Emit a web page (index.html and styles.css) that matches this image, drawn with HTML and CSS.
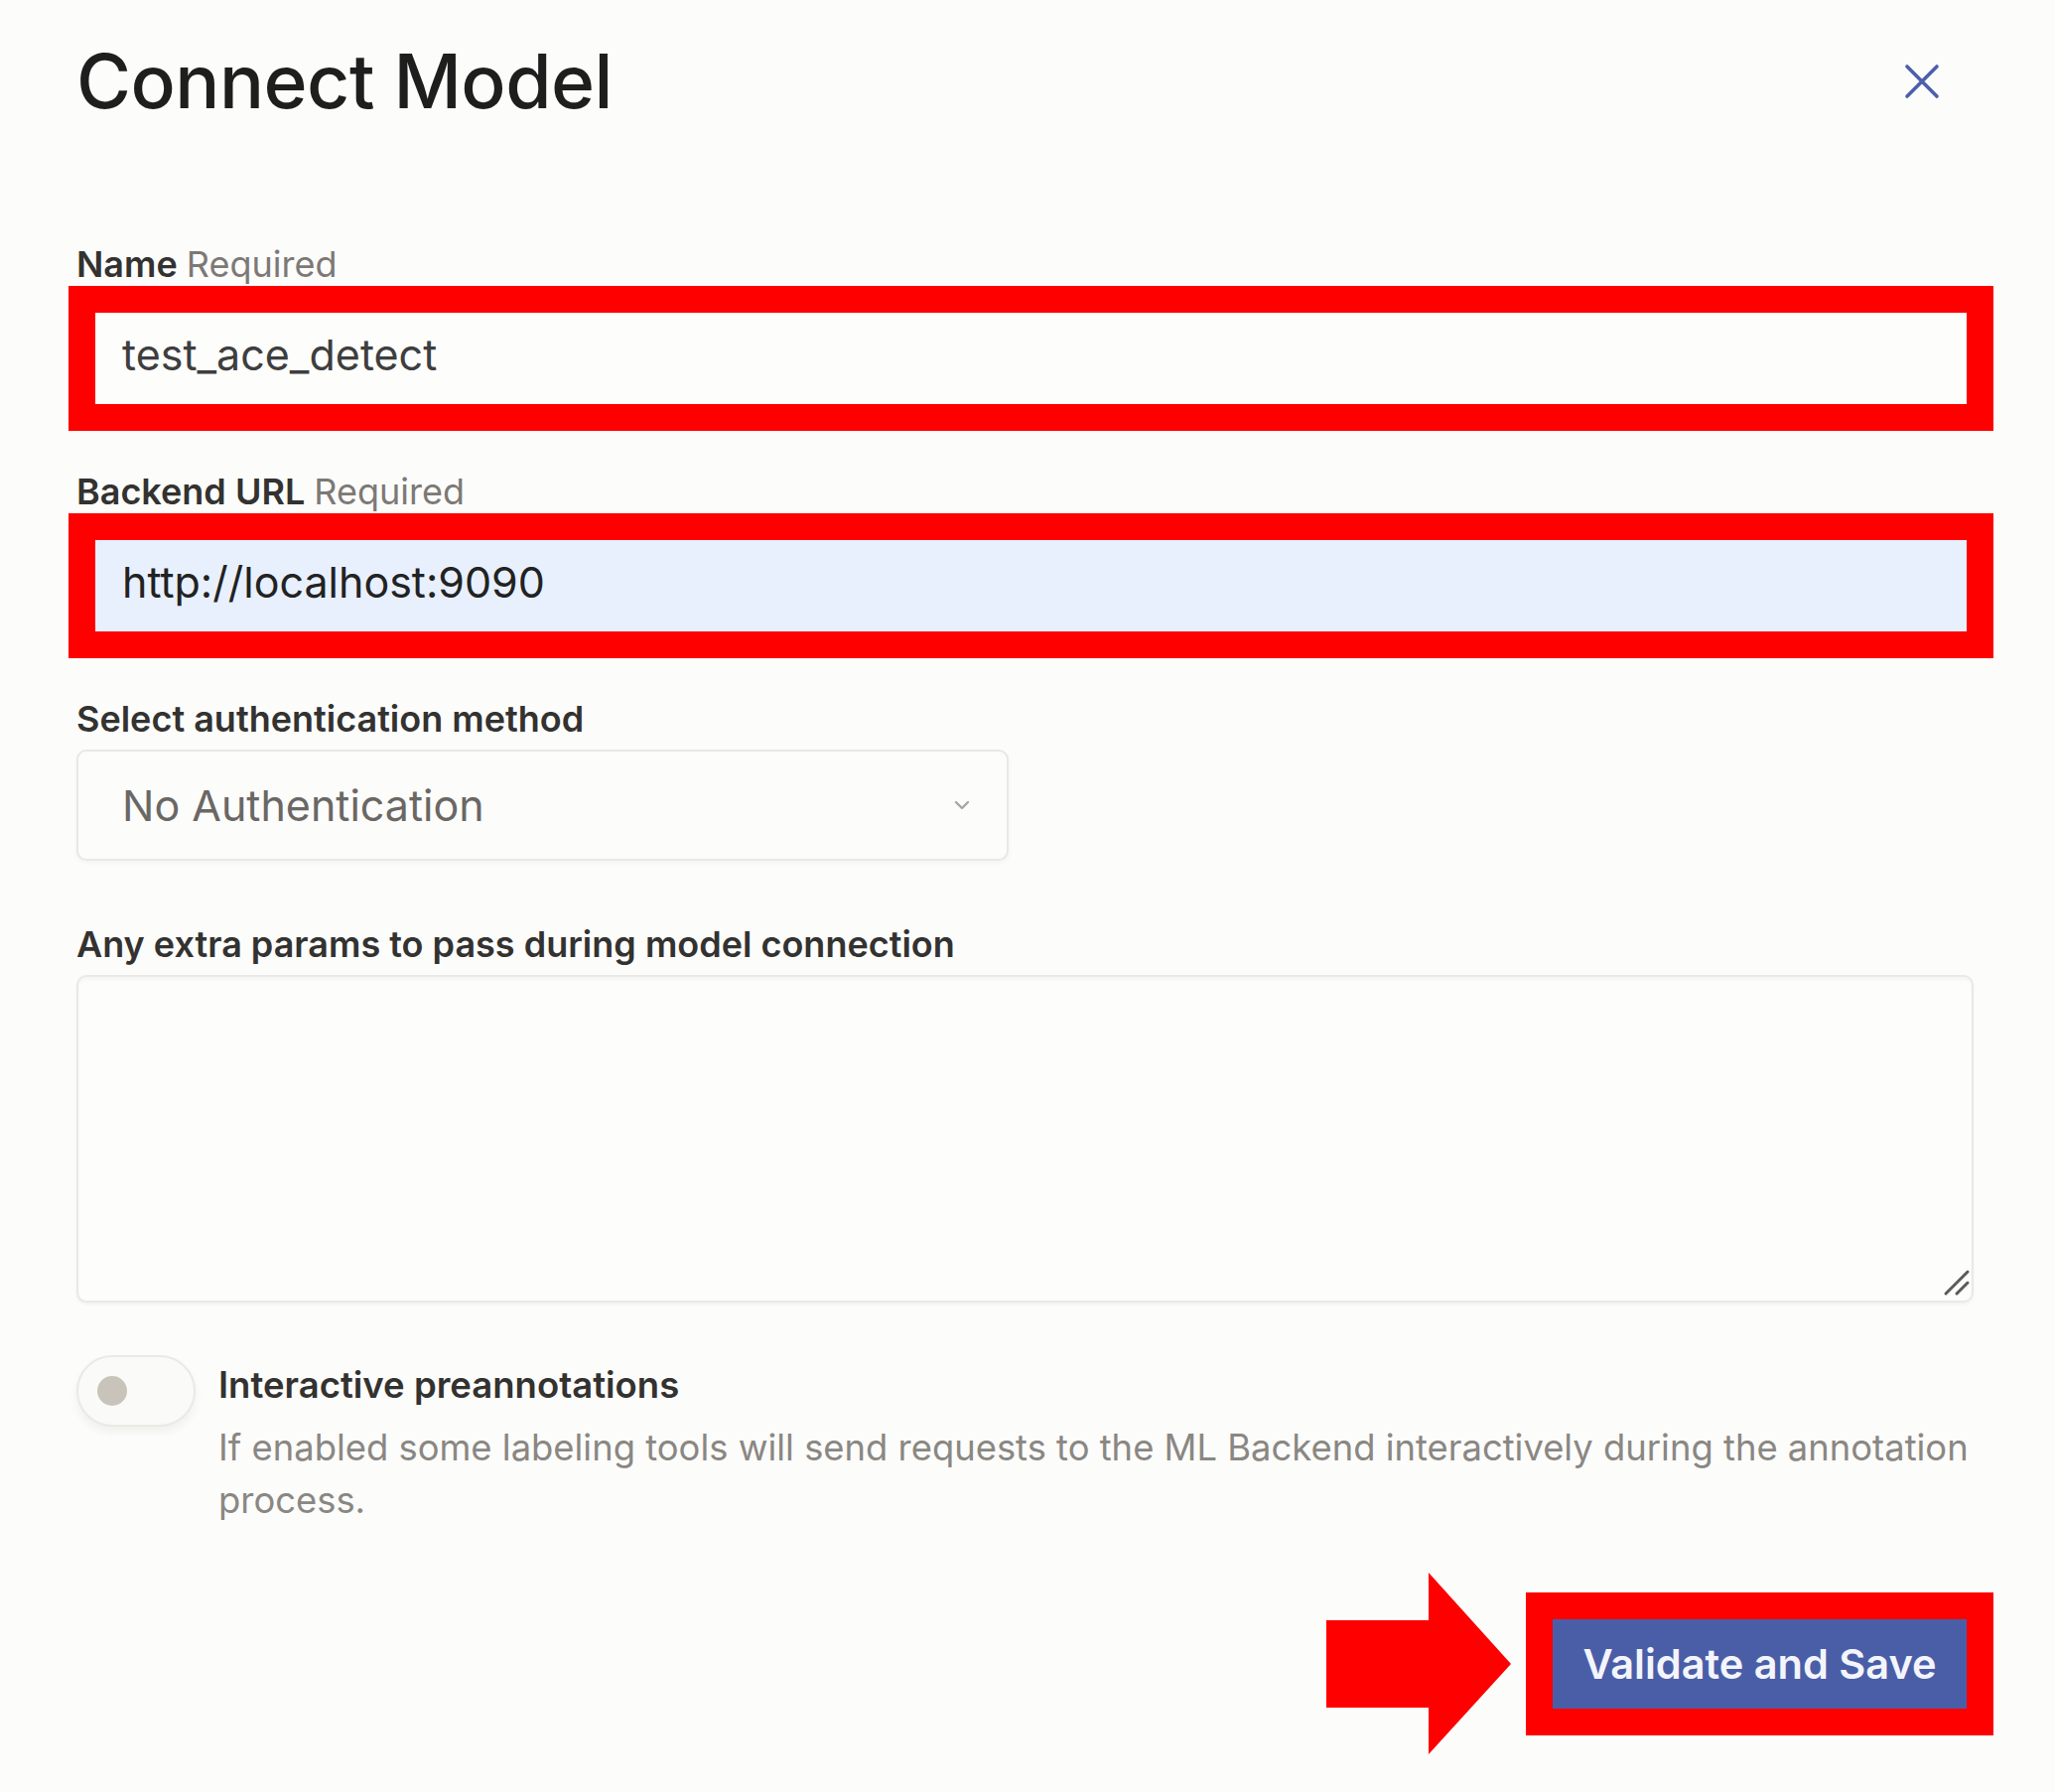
FILE: index.html
```html
<!DOCTYPE html>
<html lang="en">
<head>
    <meta charset="UTF-8">
    <title>Connect Model</title>
    <link rel="stylesheet" href="styles.css">
</head>
<body>

    <div class="modal">
        <div class="modal-header">
            <h1 class="modal-title">Connect Model</h1>
            <button class="close-btn" type="button" aria-label="Close">
                <svg width="36" height="36" viewBox="0 0 36 36">
                    <path d="M3 3 L33 33 M33 3 L3 33" stroke="#4c5fae" stroke-width="3.6" stroke-linecap="round" fill="none"/>
                </svg>
            </button>
        </div>

        <form class="form">
            <div class="field field-name">
                <label class="label">Name <span class="required">Required</span></label>
                <div class="mark">
                    <input class="input" type="text" value="test_ace_detect">
                </div>
            </div>

            <div class="field">
                <label class="label">Backend URL <span class="required">Required</span></label>
                <div class="mark">
                    <input class="input input-filled" type="text" value="http://localhost:9090">
                </div>
            </div>

            <div class="field">
                <label class="label label-plain">Select authentication method</label>
                <div class="select">
                    <span class="select-value">No Authentication</span>
                    <svg width="18" height="12" viewBox="0 0 18 12">
                        <path d="M3 3 L9 9 L15 3" stroke="#a9a6a1" stroke-width="2.4" fill="none" stroke-linecap="round" stroke-linejoin="round"/>
                    </svg>
                </div>
            </div>

            <div class="field field-params">
                <label class="label label-plain">Any extra params to pass during model connection</label>
                <div class="textarea-wrap">
                    <textarea class="textarea"></textarea>
                    <svg class="grip" width="28" height="28" viewBox="0 0 28 28">
                        <path d="M3 25 L25 3 M14 25 L25 14" stroke="#5a5a5a" stroke-width="3" stroke-linecap="round"/>
                    </svg>
                </div>
            </div>

            <div class="toggle-row">
                <div class="toggle"><span class="knob"></span></div>
                <div class="toggle-text">
                    <div class="toggle-title">Interactive preannotations</div>
                    <div class="toggle-desc">If enabled some labeling tools will send requests to the ML Backend interactively during the annotation process.</div>
                </div>
            </div>

            <div class="actions">
                <svg class="arrow" width="186" height="183" viewBox="0 0 186 183">
                    <polygon points="0,48 103,48 103,0 186,92 103,183 103,136 0,136" fill="#ff0000"/>
                </svg>
                <div class="mark mark-btn">
                    <button class="submit" type="button">Validate and Save</button>
                </div>
            </div>
        </form>
    </div>

</body>
</html>
```

FILE: styles.css
```css
*{
    margin: 0;
    padding: 0;
    box-sizing: border-box;
}

body{
    background-color: #fcfcfb;
    font-family: Inter, "Noto Sans", sans-serif;
    color: #2b2b2b;
}

.modal{
    padding: 44px 82px 0 77px;
}

.modal-header{
    display: flex;
    justify-content: space-between;
    align-items: center;
    height: 76px;
}

.modal-title{
    font-size: 75px;
    line-height: 76px;
    font-weight: 500;
    color: #1e1e1e;
    letter-spacing: -0.5px;
}

.close-btn{
    border: none;
    background: none;
    width: 36px;
    height: 36px;
    margin-right: 34px;
    display: flex;
}

.form{
    margin-top: 124px;
}

.field{
    margin-bottom: 39px;
}

.label{
    display: block;
    font-size: 36px;
    line-height: 44px;
    font-weight: 600;
    color: #333230;
}

.label-plain{
    margin-bottom: 9px;
}

.required{
    font-weight: 400;
    color: #7c7975;
}

.mark{
    border: 27px solid #ff0000;
    margin-left: -8px;
    margin-right: -20px;
}

.input{
    display: block;
    width: 100%;
    height: 92px;
    border: none;
    outline: none;
    padding: 0 27px 9px;
    font-family: Inter, "Noto Sans", sans-serif;
    font-size: 43px;
    color: #3e3e3e;
    background-color: #fdfdfc;
}

.input-filled{
    background-color: #e8f0fe;
    color: #222;
}

.select{
    width: 939px;
    height: 112px;
    border: 2px solid #ebe8e3;
    border-radius: 10px;
    background-color: #fcfcfb;
    box-shadow: 0 2px 4px rgba(0,0,0,0.04);
    display: flex;
    justify-content: space-between;
    align-items: center;
    padding: 0 36px 0 44px;
}

.select-value{
    font-size: 43px;
    color: #6a6764;
}

.field-params{
    margin-top: 62px;
    margin-bottom: 53px;
}

.textarea-wrap{
    position: relative;
}

.textarea{
    display: block;
    width: 100%;
    height: 330px;
    border: 2px solid #ece9e4;
    border-radius: 10px;
    background-color: #fdfdfc;
    box-shadow: inset 0 3px 3px rgba(0,0,0,0.03), 0 2px 3px rgba(0,0,0,0.04);
    resize: none;
    outline: none;
}

.grip{
    position: absolute;
    right: 3px;
    bottom: 6px;
}

.toggle-row{
    display: flex;
    gap: 23px;
}

.toggle{
    width: 120px;
    height: 72px;
    flex-shrink: 0;
    border: 2px solid #ece9e3;
    border-radius: 36px;
    background-color: #fafaf8;
    box-shadow: 0 5px 8px rgba(0,0,0,0.05);
    display: flex;
    align-items: center;
    padding-left: 19px;
}

.knob{
    width: 30px;
    height: 30px;
    border-radius: 50%;
    background-color: #c9c4ba;
}

.toggle-text{
    padding-top: 8px;
}

.toggle-title{
    font-size: 36.5px;
    line-height: 44px;
    font-weight: 600;
    color: #333230;
    margin-bottom: 15px;
}

.toggle-desc{
    font-size: 36.4px;
    line-height: 53px;
    color: #8a8782;
}

.actions{
    display: flex;
    justify-content: flex-end;
    align-items: center;
    gap: 15px;
    margin-top: 46px;
    margin-right: -20px;
}

.arrow{
    display: block;
}

.mark-btn{
    margin: 0;
}

.submit{
    display: block;
    width: 417px;
    height: 90px;
    border: none;
    background-color: #4a5ea8;
    color: #f4f5fb;
    font-family: Inter, "Noto Sans", sans-serif;
    font-size: 41.5px;
    font-weight: 600;
}
```
